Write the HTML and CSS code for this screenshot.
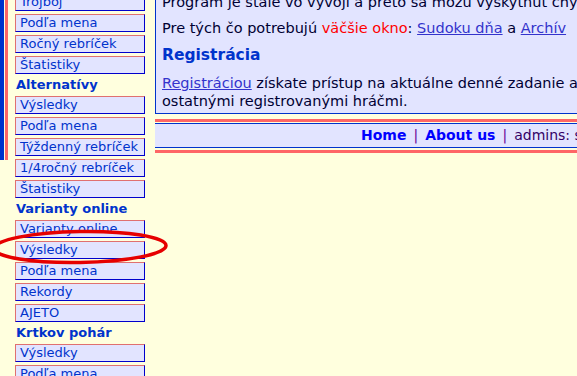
FILE: index.html
```html
<!DOCTYPE html>
<html lang="sk">
<head>
  <meta charset="UTF-8" />
  <title>Sudoku</title>
  <link rel="stylesheet" href="styles.css">
</head>
<body>
  <div class="page">
    <div class="edge"></div>

    <div class="menu">
      <a class="menu-item" href="#">Trojboj</a>
      <a class="menu-item" href="#">Podľa mena</a>
      <a class="menu-item" href="#">Ročný rebríček</a>
      <a class="menu-item" href="#">Štatistiky</a>
      <div class="menu-head">Alternatívy</div>
      <a class="menu-item" href="#">Výsledky</a>
      <a class="menu-item" href="#">Podľa mena</a>
      <a class="menu-item" href="#">Týždenný rebríček</a>
      <a class="menu-item" href="#">1/4ročný rebríček</a>
      <a class="menu-item" href="#">Štatistiky</a>
      <div class="menu-head">Varianty online</div>
      <a class="menu-item" href="#">Varianty online</a>
      <a class="menu-item" href="#">Výsledky</a>
      <a class="menu-item" href="#">Podľa mena</a>
      <a class="menu-item" href="#">Rekordy</a>
      <a class="menu-item" href="#">AJETO</a>
      <div class="menu-head">Krtkov pohár</div>
      <a class="menu-item" href="#">Výsledky</a>
      <a class="menu-item" href="#">Podľa mena</a>
    </div>

    <div class="main">
      <div class="content">
        <p>Program je stále vo vývoji a preto sa môžu vyskytnúť chyby.</p>
        <p>Pre tých čo potrebujú <span class="hot">väčšie okno</span>: <a href="#">Sudoku dňa</a> a <a href="#">Archív</a></p>
        <h2 class="title">Registrácia</h2>
        <p><a href="#">Registráciou</a> získate prístup na aktuálne denné zadanie a možnosť súťažiť<br>ostatnými registrovanými hráčmi.</p>
      </div>

      <div class="footer">
        <div class="footer-inner">
          <a href="#">Home</a><span class="sep">|</span><a href="#">About us</a><span class="sep">|</span><span class="admins">admins: sudoku</span>
        </div>
      </div>
    </div>
  </div>

  <svg class="mark" width="190" height="50" viewBox="0 0 190 50">
    <ellipse cx="88" cy="25" rx="86" ry="15.5" transform="rotate(-1 88 25)" fill="none" stroke="#e60000" stroke-width="3.5"/>
  </svg>
</body>
</html>
```

FILE: styles.css
```css
body {
  margin: 0;
  overflow: hidden;
  font-family: "DejaVu Sans", Verdana, sans-serif;
  font-size: 13px;
  color: #000033;
  background-color: #ffffde;
}
.page {
  display: flex;
  align-items: flex-start;
  margin-top: -7px;
  width: 1000px;
}
.edge {
  width: 1px;
  height: 167px;
  border-left: 4px solid #0033cc;
  border-right: 3px solid #ff6666;
  flex-shrink: 0;
}
.menu {
  width: 130px;
  margin-left: 7px;
  flex-shrink: 0;
}
.menu-item {
  display: block;
  height: 16px;
  line-height: 16px;
  padding-left: 4px;
  margin-bottom: 3px;
  border: 1px solid #0000cc;
  border-top-color: #e07070;
  border-left-color: #e07070;
  color: #0033cc;
  text-decoration: none;
  white-space: nowrap;
  background-color: #e2e4ff;
}
.menu-head {
  height: 16px;
  line-height: 16px;
  margin-bottom: 3px;
  padding-left: 1px;
  font-weight: bold;
  color: #0033cc;
  white-space: nowrap;
}
.main {
  flex: 1;
  margin-left: 10px;
}
.content {
  border-left: 1px solid #0033cc;
  border-bottom: 1px solid #0033cc;
  padding: 0 6px 3px;
  font-size: 14.5px;
  line-height: 18px;
  white-space: nowrap;
  background-color: #e2e4ff;
}
.content p {
  margin: 0 0 8px;
}
.content p:last-child {
  margin-bottom: 0;
}
.content a {
  color: #3333cc;
}
.hot {
  color: #ff0000;
}
.title {
  margin: 5px 0 9px;
  font-size: 15.5px;
  line-height: 20px;
  color: #0033cc;
}
.footer {
  margin-top: 5px;
  border-top: 3px solid #ff6666;
  border-bottom: 3px solid #ff6666;
  padding: 1px 0 2px;
}
.footer-inner {
  border-top: 1px solid #0033cc;
  border-bottom: 1px solid #0033cc;
  height: 23px;
  line-height: 23px;
  padding-left: 206px;
  font-size: 14px;
  white-space: nowrap;
  background-color: #e2e4ff;
}
.footer-inner a {
  color: #0000ff;
  font-weight: bold;
  text-decoration: none;
}
.sep {
  margin: 0 7px;
  color: #660099;
}
.admins {
  color: #330066;
}
.mark {
  position: absolute;
  left: -8px;
  top: 222px;
}
```
